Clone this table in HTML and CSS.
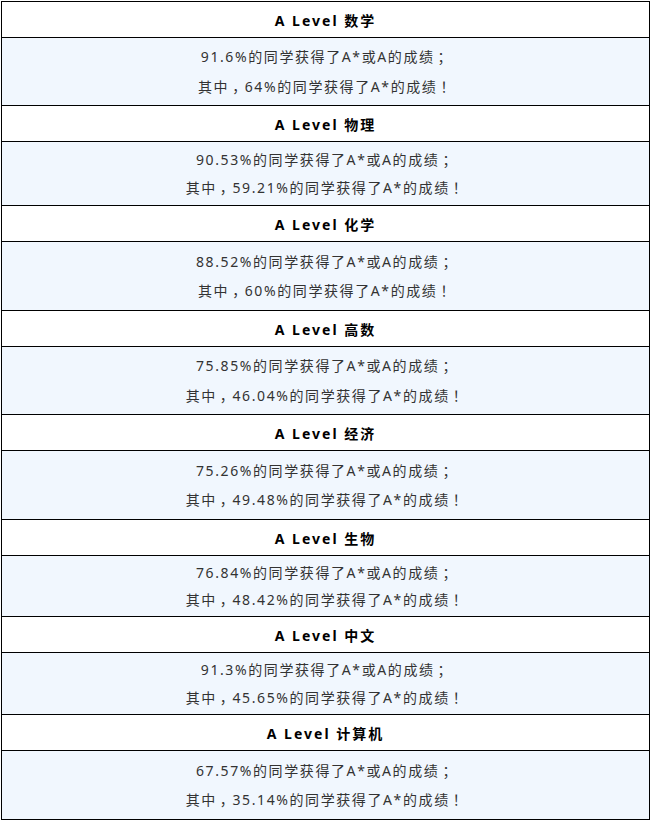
FILE: index.html
```html
<!DOCTYPE html>
<html lang="zh-CN">
<head>
<meta charset="utf-8">
<title>A Level 成绩</title>
<link rel="stylesheet" href="styles.css">
</head>
<body>
<div class="sheet">
  <div class="hd">A Level 数学</div>
  <div class="bd h67"><p>91.6%的同学获得了A*或A的成绩<span class="pc">；</span></p><p>其中<span class="pc">，</span>64%的同学获得了A*的成绩<span class="pc">！</span></p></div>
  <div class="hd">A Level 物理</div>
  <div class="bd h63"><p>90.53%的同学获得了A*或A的成绩<span class="pc">；</span></p><p>其中<span class="pc">，</span>59.21%的同学获得了A*的成绩<span class="pc">！</span></p></div>
  <div class="hd">A Level 化学</div>
  <div class="bd h68"><p>88.52%的同学获得了A*或A的成绩<span class="pc">；</span></p><p>其中<span class="pc">，</span>60%的同学获得了A*的成绩<span class="pc">！</span></p></div>
  <div class="hd">A Level 高数</div>
  <div class="bd h67"><p>75.85%的同学获得了A*或A的成绩<span class="pc">；</span></p><p>其中<span class="pc">，</span>46.04%的同学获得了A*的成绩<span class="pc">！</span></p></div>
  <div class="hd">A Level 经济</div>
  <div class="bd h68"><p>75.26%的同学获得了A*或A的成绩<span class="pc">；</span></p><p>其中<span class="pc">，</span>49.48%的同学获得了A*的成绩<span class="pc">！</span></p></div>
  <div class="hd">A Level 生物</div>
  <div class="bd h60"><p>76.84%的同学获得了A*或A的成绩<span class="pc">；</span></p><p>其中<span class="pc">，</span>48.42%的同学获得了A*的成绩<span class="pc">！</span></p></div>
  <div class="hd">A Level 中文</div>
  <div class="bd h61"><p>91.3%的同学获得了A*或A的成绩<span class="pc">；</span></p><p>其中<span class="pc">，</span>45.65%的同学获得了A*的成绩<span class="pc">！</span></p></div>
  <div class="hd">A Level 计算机</div>
  <div class="bd h68"><p>67.57%的同学获得了A*或A的成绩<span class="pc">；</span></p><p>其中<span class="pc">，</span>35.14%的同学获得了A*的成绩<span class="pc">！</span></p></div>
</div>
</body>
</html>
```
FILE: styles.css
```css
html, body {
  margin: 0;
  padding: 0;
  background: #fff;
}
body {
  padding: 1px 0 0 1px;
  font-family: "Noto Sans", "Noto Sans CJK SC", sans-serif;
  font-size: 14px;
}
.sheet {
  width: 649px;
  box-sizing: border-box;
  border: 1px solid #000;
  border-bottom: none;
}
.hd {
  height: 35px;
  border-bottom: 1px solid #000;
  display: flex;
  align-items: center;
  justify-content: center;
  font-weight: bold;
  letter-spacing: 2px;
  color: #000;
  background: #fff;
}
.bd {
  border-bottom: 1px solid #000;
  background: #f1f7fe;
  display: flex;
  flex-direction: column;
  justify-content: space-evenly;
  align-items: center;
  color: #333;
  letter-spacing: 1.6px;
}
.bd p {
  margin: 0;
  line-height: 20px;
}
.pc {
  font-family: "Noto Sans CJK SC", sans-serif;
  padding-left: 3px;
  letter-spacing: -1.4px;
}
.h60 { height: 60px; }
.h61 { height: 61px; }
.h63 { height: 63px; }
.h67 { height: 67px; }
.h68 { height: 68px; }
```
